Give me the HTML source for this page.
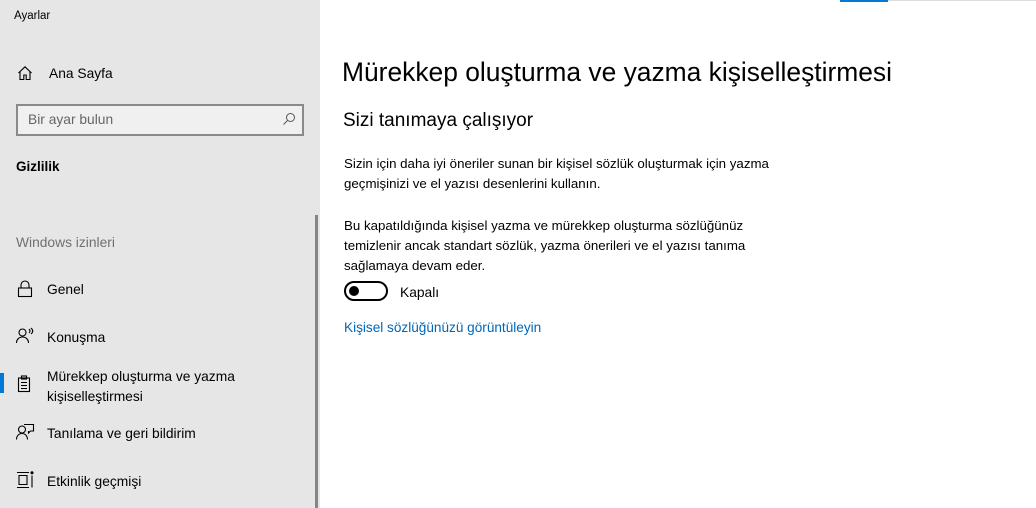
<!DOCTYPE html>
<html><head><meta charset="utf-8"><style>
*{margin:0;padding:0;box-sizing:border-box}
body{width:1036px;height:508px;overflow:hidden;background:#fff;font-family:"Liberation Sans",sans-serif;color:#000;position:relative}
.a{position:absolute;white-space:nowrap}
#side{position:absolute;left:0;top:0;width:320px;height:508px;background:#e6e6e6}
.ic{position:absolute}
</style></head><body>
<div id="side">
<div class="a" style="left:14px;top:10px;font-size:11.5px">Ayarlar</div>
<svg class="ic" style="left:17px;top:65px" width="16" height="16" viewBox="0 0 16 16" fill="none" stroke="#000" stroke-width="1.1"><path d="M1.5 8L8 1.8 14.5 8M3 6.8V14.5h3.8V10h2.4v4.5H13V6.8"/></svg>
<div class="a" style="left:49px;top:66px;font-size:13.8px">Ana Sayfa</div>
<div class="a" style="left:16px;top:104px;width:288px;height:32px;border:2px solid #8a8a8a;background:#f0f0f0"></div>
<div class="a" style="left:28px;top:112px;font-size:13.8px;color:#666">Bir ayar bulun</div>
<svg class="ic" style="left:282px;top:112px" width="14" height="14" viewBox="0 0 14 14" fill="none" stroke="#555" stroke-width="1"><circle cx="8.5" cy="5.5" r="4"/><path d="M5.5 8.5L1.5 12.5"/></svg>
<div class="a" style="left:16px;top:159px;font-size:13.5px;font-weight:bold">Gizlilik</div>
<div class="a" style="left:16px;top:235px;font-size:13.8px;color:#707070">Windows izinleri</div>
<svg class="ic" style="left:17px;top:280px" width="16" height="18" viewBox="0 0 16 18" fill="none" stroke="#000" stroke-width="1.1"><rect x="1.5" y="8" width="13" height="8.5"/><path d="M4 8V5a4 4 0 0 1 8 0v3"/></svg>
<div class="a" style="left:47px;top:282px;font-size:13.8px">Genel</div>
<svg class="ic" style="left:15px;top:327px" width="20" height="18" viewBox="0 0 20 18" fill="none" stroke="#000" stroke-width="1.1"><circle cx="7.5" cy="5.5" r="3.5"/><path d="M1.5 16c0-3.5 2.5-6 6-6s6 2.5 6 6M14 2q2 2 0 4M16 1q3.5 3 0 6"/></svg>
<div class="a" style="left:47px;top:330px;font-size:13.8px">Konuşma</div>
<div class="a" style="left:0;top:373px;width:4px;height:20px;background:#0078d7"></div>
<svg class="ic" style="left:17px;top:375px" width="14" height="18" viewBox="0 0 14 18" fill="none" stroke="#000" stroke-width="1.1"><rect x="1.5" y="3" width="11" height="13.5"/><rect x="4.5" y="1" width="5" height="3"/><path d="M4 7.5h6M4 10.5h6M4 13.5h6"/></svg>
<div class="a" style="left:47px;top:367px;font-size:13.8px;line-height:20px">Mürekkep oluşturma ve yazma<br>kişiselleştirmesi</div>
<svg class="ic" style="left:15px;top:423px" width="20" height="18" viewBox="0 0 20 18" fill="none" stroke="#000" stroke-width="1.1"><circle cx="7" cy="6.5" r="3.5"/><path d="M1.5 16.5c0-3.5 2.3-6 5.5-6s5.5 2.5 5.5 6M9 1.5h9.5v6.5h-3l-2 2v-2"/></svg>
<div class="a" style="left:47px;top:426px;font-size:13.8px">Tanılama ve geri bildirim</div>
<svg class="ic" style="left:16px;top:471px" width="20" height="18" viewBox="0 0 20 18" fill="none" stroke="#000" stroke-width="1.1"><path d="M1 1.5h12M1 16.5h12M3 4.5h8v9H3zM16 4.5v12"/><circle cx="16" cy="1.8" r="1" fill="#000"/></svg>
<div class="a" style="left:47px;top:474px;font-size:13.8px">Etkinlik geçmişi</div>
<div class="a" style="left:315px;top:215px;width:3px;height:293px;background:#858585"></div>
</div>
<div class="a" style="left:840px;top:0;width:48px;height:2px;background:#0078d7"></div>
<div class="a" style="left:888px;top:0;width:148px;height:1px;background:#ddd"></div>
<div class="a" style="left:342px;top:57px;font-size:26.4px">Mürekkep oluşturma ve yazma kişiselleştirmesi</div>
<div class="a" style="left:343px;top:110px;font-size:19px">Sizi tanımaya çalışıyor</div>
<div class="a" style="left:344px;top:154px;font-size:13.3px;line-height:20px">Sizin için daha iyi öneriler sunan bir kişisel sözlük oluşturmak için yazma<br>geçmişinizi ve el yazısı desenlerini kullanın.</div>
<div class="a" style="left:344px;top:216px;font-size:13.3px;line-height:20px">Bu kapatıldığında kişisel yazma ve mürekkep oluşturma sözlüğünüz<br>temizlenir ancak standart sözlük, yazma önerileri ve el yazısı tanıma<br>sağlamaya devam eder.</div>
<div class="a" style="left:344px;top:281px;width:44px;height:20px;border:2px solid #000;border-radius:10px"></div>
<div class="a" style="left:349px;top:286px;width:10px;height:10px;border-radius:50%;background:#000"></div>
<div class="a" style="left:400px;top:285px;font-size:13.8px">Kapalı</div>
<div class="a" style="left:344px;top:320px;font-size:13.6px;color:#0067b8">Kişisel sözlüğünüzü görüntüleyin</div>
</body></html>
